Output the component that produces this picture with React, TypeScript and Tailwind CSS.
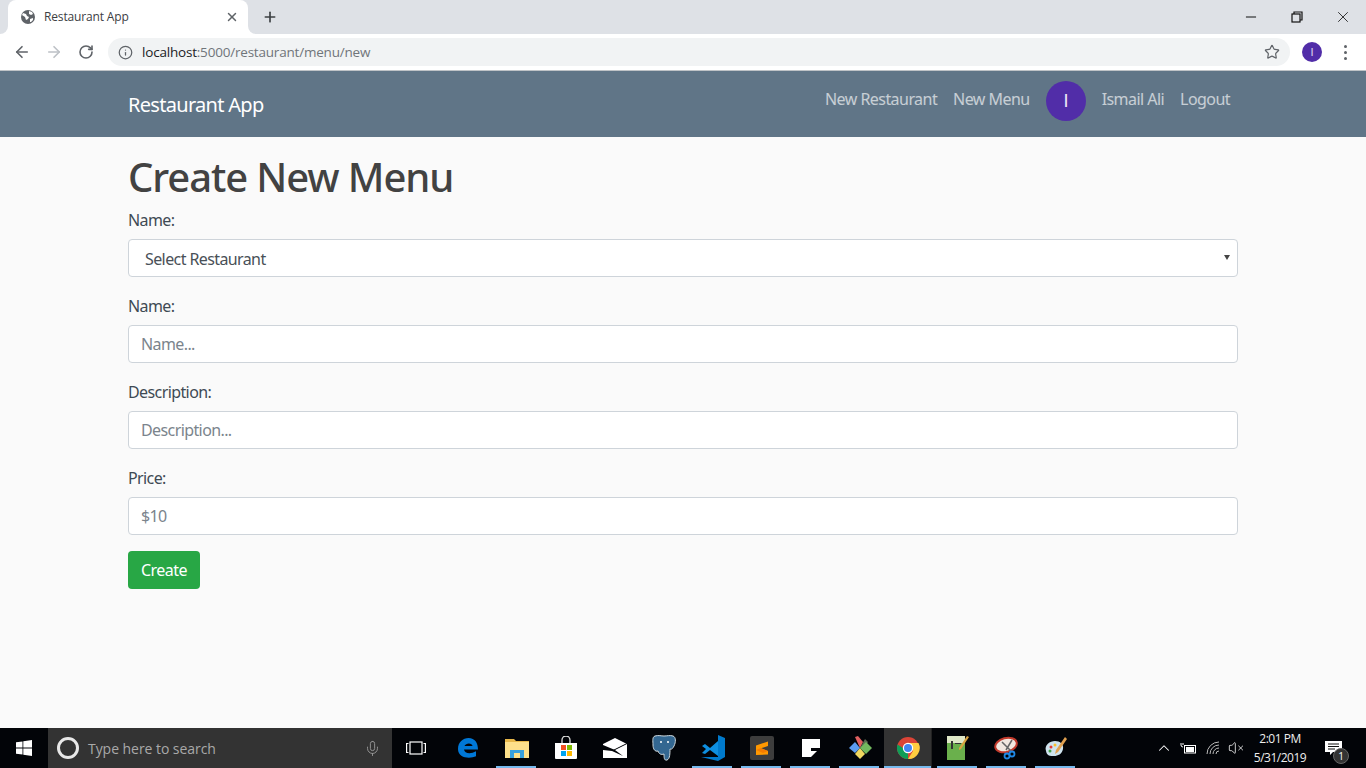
import { ArrowLeft, ArrowRight, RotateCw, Info, Star, X, Plus, Minus, Mic, ChevronUp, VolumeX } from 'lucide-react';

const font = "font-['Noto_Sans','Open_Sans',sans-serif]";

function Globe() {
  return (
    <svg width="16" height="16" viewBox="0 0 16 16">
      <circle cx="8" cy="8" r="7" fill="#5f6368" />
      <path d="M3 4l3 1 1 2 2 1-1 2-2 1-1-3-3-2zM9 2l3 1 1 2-2 1-2-1zM10 10l3-1 0 2-2 2-1 0z" fill="#fff" />
    </svg>
  );
}

function Corner({ side }: { side: 'left' | 'right' }) {
  return (
    <div className={side === 'left' ? 'absolute bottom-0 left-[-8px] w-2 h-2 bg-white' : 'absolute bottom-0 right-[-8px] w-2 h-2 bg-white'}>
      <div className={side === 'left' ? 'w-2 h-2 bg-[#dee1e6] rounded-br-lg' : 'w-2 h-2 bg-[#dee1e6] rounded-bl-lg'} />
    </div>
  );
}

function Chrome() {
  return (
    <div className="shrink-0 bg-white">
      <div className="flex h-[34px] bg-[#dee1e6] pl-2">
        <div className="relative flex items-center w-[240px] bg-white rounded-t-lg pl-3 pr-2">
          <Corner side="left" />
          <Corner side="right" />
          <Globe />
          <span className="ml-2 flex-1 text-[12px] text-[#3c4043] font-['Open_Sans',sans-serif] tracking-[-0.15px]">Restaurant App</span>
          <X size={14} strokeWidth={2.5} className="text-[#5f6368] mr-[1px]" />
        </div>
        <div className="flex items-center ml-[14px]">
          <Plus size={16} strokeWidth={2.5} className="text-[#3c4043]" />
        </div>
        <div className="flex-1" />
        <div className="flex items-center text-[#111]">
          <div className="w-[46px] flex justify-center"><Minus size={16} strokeWidth={1.4} className="text-black" /></div>
          <div className="w-[46px] flex justify-center">
            <svg width="12" height="12" viewBox="0 0 12 12" fill="none" stroke="#111" strokeWidth="1.2">
              <rect x="1" y="3" width="8" height="8" />
              <path d="M3 3V1h8v8H9" />
            </svg>
          </div>
          <div className="w-[46px] flex justify-center"><X size={18} strokeWidth={1.1} /></div>
        </div>
      </div>
      <div className="flex items-center h-[36px] border-b border-[#bfc3c7] box-content">
        <ArrowLeft size={18} strokeWidth={2.2} className="ml-[13px] text-[#5f6368]" />
        <ArrowRight size={18} strokeWidth={2.2} className="ml-[14px] text-[#bdc1c6]" />
        <RotateCw size={16} strokeWidth={2.4} className="ml-[15px] text-[#5f6368]" />
        <div className="ml-[14px] flex items-center flex-1 h-[28px] bg-[#f1f3f4] rounded-full pl-[10px] pr-[10px]">
          <Info size={15} strokeWidth={2} className="text-[#5f6368]" />
          <span className="ml-[9px] flex-1 text-[13.5px] text-[#70757a] font-['Open_Sans',sans-serif] tracking-[-0.2px]">
            <span className="text-[#202124]">localhost</span>:5000/restaurant/menu/new
          </span>
          <Star size={16} strokeWidth={1.8} className="text-[#5f6368]" />
        </div>
        <div className="ml-[12px] w-5 h-5 rounded-full bg-[#512da8] flex items-center justify-center text-white/80 text-[11px] leading-none font-['Liberation_Sans',sans-serif]">I</div>
        <div className="ml-[22px] mr-[19px] flex flex-col gap-[3px]">
          <span className="w-[3px] h-[3px] rounded-full bg-[#5f6368]" />
          <span className="w-[3px] h-[3px] rounded-full bg-[#5f6368]" />
          <span className="w-[3px] h-[3px] rounded-full bg-[#5f6368]" />
        </div>
      </div>
    </div>
  );
}

function Navbar() {
  return (
    <nav className="shrink-0 h-[66px] bg-[#607587] flex justify-center">
      <div className="w-[1110px] flex items-start justify-between">
        <a className="mt-[22px] text-[20px] leading-[24px] text-white tracking-[-0.7px]">Restaurant App</a>
        <div className="flex items-start mt-[10px] text-[16px] tracking-[-0.55px] text-white/65">
          <a className="px-2 pt-[6px] leading-[24px]">New Restaurant</a>
          <a className="px-2 pt-[6px] leading-[24px]">New Menu</a>
          <div className="mx-2 w-10 h-10 rounded-full bg-[#512da8] flex items-center justify-center text-white/90 text-[18px] font-['Liberation_Sans',sans-serif]">I</div>
          <a className="px-2 pt-[6px] leading-[24px]">Ismail Ali</a>
          <a className="px-2 pt-[6px] leading-[24px]">Logout</a>
        </div>
      </div>
    </nav>
  );
}

function Field({ label, placeholder }: { label: string; placeholder: string }) {
  return (
    <div className="mb-4">
      <label className="block mb-2 h-6 leading-[26px] text-[#3f4a54] tracking-[-0.6px]">{label}</label>
      <input
        placeholder={placeholder}
        className="block w-full h-[38px] px-3 bg-white border border-[#ced4da] rounded text-[16px] tracking-[-0.6px] text-[#495057] placeholder:text-[#7b848c] outline-none"
      />
    </div>
  );
}

function Form() {
  return (
    <main className="flex-1 bg-[#fafafa] flex justify-center pt-[14px]">
      <div className="w-[1110px]">
        <h1 className="h-12 mb-2 text-[40px] leading-[52px] font-medium text-[#424242] tracking-[-1.1px]">Create New Menu</h1>
        <div className="mb-4">
          <label className="block mb-2 h-6 leading-[26px] text-[#3f4a54] tracking-[-0.6px]">Name:</label>
          <div className="relative">
            <select className="block w-full h-[38px] pl-4 pt-[2px] bg-white border border-[#ced4da] rounded text-[16px] tracking-[-0.6px] text-[#495057] appearance-none outline-none">
              <option>Select Restaurant</option>
            </select>
            <svg width="7" height="5" viewBox="0 0 7 5" className="absolute right-[7px] top-[16px]">
              <path d="M0 0h6L3 5z" fill="#444" />
            </svg>
          </div>
        </div>
        <Field label="Name:" placeholder="Name..." />
        <Field label="Description:" placeholder="Description..." />
        <Field label="Price:" placeholder="$10" />
        <button className="w-[72px] h-[38px] bg-[#28a745] rounded text-white text-[16px] tracking-[-0.5px]">Create</button>
      </div>
    </main>
  );
}

function AppIcon({ running, children }: { running?: boolean; children: React.ReactNode }) {
  return (
    <div className="relative w-[49px] h-10 flex items-center justify-center">
      {children}
      {running && <span className="absolute bottom-0 left-[4px] right-[5px] h-[2px] bg-[#76b9ed]" />}
    </div>
  );
}

function Taskbar() {
  return (
    <footer className="shrink-0 h-10 bg-[#020408] flex items-center text-white font-['Open_Sans',sans-serif]">
      <div className="w-12 flex justify-center">
        <svg width="16" height="16" viewBox="0 0 16 16" fill="#fff">
          <path d="M0 2.300l6.500-.9v6.200H0zM7.300 1.300L16 0v7.600H7.300zM0 8.400h6.500v6.200L0 13.700zM7.300 8.400H16V16l-8.700-1.200z" />
        </svg>
      </div>
      <div className="flex items-center w-[344px] h-10 bg-[#333] pl-[9px] pr-[11px]">
        <span className="w-[22px] h-[22px] rounded-full border-[3px] border-[#e8e8e8]" />
        <span className="ml-[9px] flex-1 text-[14px] text-[#a9a9a9] tracking-[-0.05px]">Type here to search</span>
        <Mic size={17} strokeWidth={1.3} className="text-[#999]" />
      </div>
      <div className="w-[51px] flex justify-center pr-1">
        <svg width="20" height="14" viewBox="0 0 20 14" fill="none" stroke="#fff" strokeWidth="1.2">
          <rect x="4" y="1" width="12" height="12" />
          <path d="M2.500 2.500H.6v9h1.900M17.500 2.500h1.900v9h-1.900" />
        </svg>
      </div>
      <AppIcon>
        <svg width="22" height="22" viewBox="0 0 22 22">
          <path d="M1 12C1 5 6 1 11.500 1 18 1 21 6 21 12.500H7c.4 4 6.500 5 12 1.800v5C13 22 1 21.500 1 12zM7.500 9h8c-.2-3.500-6.800-3.500-8 0z" fill="#0078d7" />
        </svg>
      </AppIcon>
      <AppIcon running>
        <svg width="24" height="22" viewBox="0 0 24 22">
          <path d="M0 2h9l2 2h13v3H0z" fill="#e8b84a" />
          <rect y="5" width="24" height="16" fill="#fde08b" />
          <rect x="5" y="13" width="14" height="8" fill="#38a0dc" />
          <rect x="9" y="16" width="6" height="5" fill="#fde08b" />
        </svg>
      </AppIcon>
      <AppIcon>
        <svg width="24" height="24" viewBox="0 0 24 24">
          <path d="M8 7V4a4 4 0 018 0v3" fill="none" stroke="#ddd" strokeWidth="1.300" />
          <path d="M1 7h22v15a1 1 0 01-1 1H2a1 1 0 01-1-1z" fill="#fff" />
          <rect x="7" y="9" width="5" height="5" fill="#f25022" />
          <rect x="13" y="9" width="5" height="5" fill="#7fba00" />
          <rect x="7" y="15" width="5" height="5" fill="#00a4ef" />
          <rect x="13" y="15" width="5" height="5" fill="#ffb900" />
        </svg>
      </AppIcon>
      <AppIcon>
        <svg width="24" height="20" viewBox="0 0 24 20">
          <path d="M0 6l12-6 12 6v14H0z" fill="#fff" />
          <path d="M0 7l12 5 8 6-11-5-9-1z" fill="#020408" />
          <path d="M24 6l-12 6-2 0 14-7z" fill="#020408" />
        </svg>
      </AppIcon>
      <AppIcon>
        <svg width="24" height="26" viewBox="0 0 24 26">
          <path d="M3 1c4-1 6 0 9 0s6-1 9 0 3 6 1 10-3 3-4 3c0 4 0 10-3 11s-3-3-3-6c-3 1-5 0-6-3-3 1-5-2-5-6S0 2 3 1z" fill="#336791" stroke="#cfd8dc" strokeWidth="1" />
          <circle cx="9" cy="7" r="1" fill="#fff" />
          <circle cx="16" cy="7" r="1" fill="#fff" />
        </svg>
      </AppIcon>
      <AppIcon running>
        <svg width="24" height="26" viewBox="0 0 24 26">
          <path d="M17 0l7 3v19l-7 4-17-4 17 0z" fill="#007acc" />
          <path d="M17 6L9 13 4 9 1 11l4 3-4 4 3 1 5-4 8 6z" fill="#0e8fe0" />
        </svg>
      </AppIcon>
      <AppIcon running>
        <svg width="24" height="24" viewBox="0 0 24 24">
          <rect width="24" height="24" rx="2" fill="#3d3d3d" />
          <path d="M6 9.500L18 5.500v4.500L6 14zM6 10.500l12 4.500v3.500L6 19z" fill="#ff9800" />
          <path d="M6 14l5-2 7 3-5 2z" fill="#f57c00" />
        </svg>
      </AppIcon>
      <AppIcon running>
        <svg width="18" height="18" viewBox="0 0 18 18">
          <rect width="18" height="18" fill="#fff" />
          <rect x="9" y="9" width="9" height="9" fill="#020408" />
          <path d="M9 18v-6h6z" fill="#fff" />
        </svg>
      </AppIcon>
      <AppIcon running>
        <svg width="24" height="24" viewBox="0 0 24 24">
          <path d="M12 12L7 1l3-1 5 6z" fill="#e06060" />
          <path d="M12 12L17 3l3 3-4 7z" fill="#5a6a50" />
          <path d="M1 12l6-6 5 6-5 5z" fill="#5b9cf0" />
          <path d="M7 18l5-6 5 6-5 5z" fill="#f0d860" />
          <path d="M12 12l6-6 6 6-6 6z" fill="#72b95e" />
        </svg>
      </AppIcon>
      <div className="relative w-[48px] h-10 flex items-center justify-center bg-[#333] border-r border-[#222]">
        <svg width="24" height="24" viewBox="0 0 24 24">
          <circle cx="12" cy="12" r="11" fill="#db4437" />
          <path d="M12 12L2.500 17.500A11 11 0 0012 23z" fill="#0f9d58" />
          <path d="M2.500 17.500A11 11 0 011.500 8.500L7 12l5 11h2z" fill="#0f9d58" />
          <path d="M12 7h10.500A11 11 0 0112 23l5-8z" fill="#ffcd40" />
          <circle cx="12" cy="12" r="5.200" fill="#fff" />
          <circle cx="12" cy="12" r="4" fill="#4285f4" />
        </svg>
        <span className="absolute bottom-0 left-0 right-0 h-[2px] bg-[#76b9ed]" />
      </div>
      <div className="w-[1px]" />
      <AppIcon running>
        <svg width="24" height="26" viewBox="0 0 24 26">
          <path d="M1 1h18v24H1z" fill="#6ab04c" />
          <path d="M1 1h18v7H1z" fill="#dfe8c8" />
          <path d="M5 6h2v8H5zM9 8h6v1H9z" fill="#333" />
          <path d="M21 1l2 1-8 12-2 1 0-2z" fill="#d9a441" />
        </svg>
      </AppIcon>
      <AppIcon running>
        <svg width="26" height="24" viewBox="0 0 26 24">
          <ellipse cx="12" cy="9" rx="11" ry="7" fill="#f1e7df" stroke="#c0392b" strokeWidth="2" transform="rotate(-15 12 9)" />
          <path d="M8 6l9 9M18 4l-6 10" stroke="#666" strokeWidth="1.500" />
          <circle cx="18" cy="18" r="2.500" fill="none" stroke="#1e88e5" strokeWidth="1.800" />
          <circle cx="13" cy="20" r="2.500" fill="none" stroke="#1e88e5" strokeWidth="1.800" />
        </svg>
      </AppIcon>
      <AppIcon running>
        <svg width="24" height="24" viewBox="0 0 24 24">
          <path d="M2 15C0 9 6 5 11 5s9 3 8 8-5 7-9 7-7 0-8-5z" fill="#cfe3ee" />
          <circle cx="7" cy="11" r="1.500" fill="#e53935" />
          <circle cx="11" cy="9" r="1.500" fill="#fbc02d" />
          <circle cx="6" cy="15" r="1.500" fill="#43a047" />
          <path d="M21 1l2 2-9 13-3 2 1-4z" fill="#e0a050" />
        </svg>
      </AppIcon>
      <div className="flex-1" />
      <div className="flex items-center">
        <ChevronUp size={18} strokeWidth={1.4} className="mr-[7px]" />
        <svg width="17" height="12" viewBox="0 0 17 12" className="mr-[9px]" fill="none" stroke="#fff" strokeWidth="1">
          <rect x="4.500" y="3.500" width="11" height="7.500" />
          <rect x="6" y="5" width="8" height="5" fill="#fff" stroke="none" />
          <path d="M1 1v2a2 2 0 002 2M3 1v2" />
        </svg>
        <svg width="16" height="14" viewBox="0 0 16 14" className="mr-[6px]" fill="none" stroke="#bbb" strokeWidth="1">
          <path d="M1 13A12 12 0 0113 1M4 13a9 9 0 019-9M7 13a6 6 0 016-6M10 13a3 3 0 013-3" />
        </svg>
        <VolumeX size={16} strokeWidth={1.2} className="mr-[6px]" />
        <div className="w-[60px] flex flex-col items-center text-[12px] leading-[19px] tracking-[-0.5px] text-[#eee]">
          <span>2:01 PM</span>
          <span>5/31/2019</span>
        </div>
        <div className="relative w-[46px] flex justify-center">
          <svg width="17" height="15" viewBox="0 0 17 15" fill="#fff">
            <path d="M0 0h17v11H8l-3 3v-3H0z" />
            <path d="M3 3h11M3 5.500h11M3 8h7" stroke="#111" strokeWidth="1" />
          </svg>
          <span className="absolute left-[23px] top-[7px] w-4 h-4 rounded-full bg-[#333] border border-[#666] text-[10px] leading-[14px] text-center">1</span>
        </div>
        <div className="w-[10px]" />
      </div>
    </footer>
  );
}

export default function App() {
  return (
    <div className={`h-screen flex flex-col overflow-hidden ${font}`}>
      <Chrome />
      <Navbar />
      <Form />
      <Taskbar />
    </div>
  );
}
